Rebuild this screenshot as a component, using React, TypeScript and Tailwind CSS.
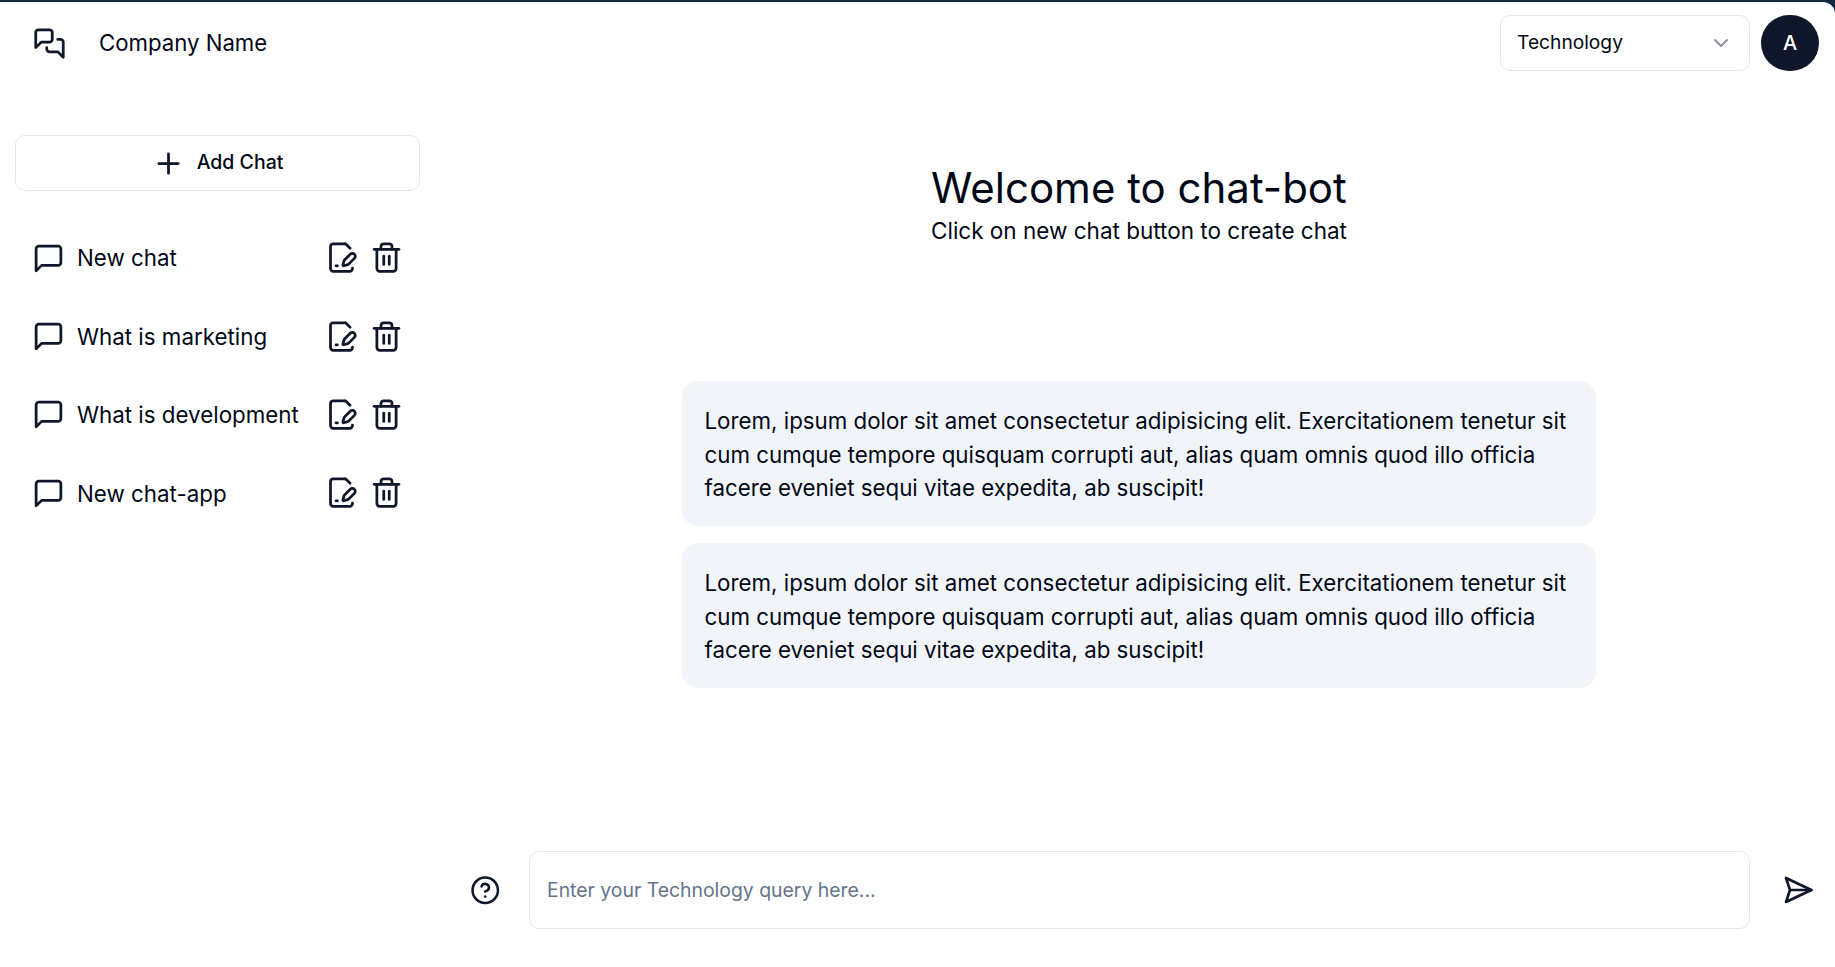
import { Plus, CircleHelp, ChevronDown, FilePenLine, Trash2 } from "lucide-react";

const chats = ["New chat", "What is marketing", "What is development", "New chat-app"];
const lorem = "Lorem, ipsum dolor sit amet consectetur adipisicing elit. Exercitationem tenetur sit cum cumque tempore quisquam corrupti aut, alias quam omnis quod illo officia facere eveniet sequi vitae expedita, ab suscipit!";

function Glyph({ size, className, children }: { size: number; className?: string; children: React.ReactNode }) {
  return (
    <svg width={size} height={size} viewBox="0 0 24 24" fill="none" stroke="currentColor" strokeWidth={2} strokeLinecap="round" strokeLinejoin="round" className={className}>
      {children}
    </svg>
  );
}

export default function App() {
  return (
    <div className="h-[967px] w-[1835px] overflow-hidden bg-[#0f2a43] pt-[2px] font-['Inter',sans-serif] text-[#020817]">
      <div className="flex h-[965px] flex-col rounded-tr-[12px] bg-white">
        <header className="flex h-[82px] items-center pl-[32.6px] pr-[16px]">
          <Glyph size={33} className="shrink-0 text-[#0f172a]">
            <path d="M14 9a2 2 0 0 1-2 2H6l-4 4V4c0-1.1.9-2 2-2h8a2 2 0 0 1 2 2v5Z" />
            <path d="M18 9h2a2 2 0 0 1 2 2v11l-4-4h-6a2 2 0 0 1-2-2v-1" />
          </Glyph>
          <span className="ml-[33.4px] text-[22.2px]">Company Name</span>
          <div className="ml-auto flex h-[56px] w-[250px] items-center justify-between rounded-[10px] border border-[#e2e8f0] pl-[16px] pr-[16px] text-[19.2px]">
            <span className="mb-[2px]">Technology</span>
            <ChevronDown size={24} strokeWidth={1.8} className="text-[#8a8f98]" />
          </div>
          <div className="ml-[11px] flex h-[56px] w-[58px] items-center justify-center rounded-full bg-[#0f172a] text-[20px] font-medium text-white">A</div>
        </header>
        <div className="flex min-h-0 flex-1">
          <aside className="w-[450px] shrink-0 pl-[15px] pt-[51px]">
            <div className="flex h-[56px] w-[405px] items-center justify-center gap-[12px] rounded-[10px] border border-[#e2e8f0] text-[19.5px] font-medium">
              <Plus size={33} strokeWidth={2} className="text-[#0f172a]" />
              <span>Add Chat</span>
            </div>
            <ul className="mt-[28px] flex w-[405px] flex-col">
              {chats.map((c) => (
                <li key={c} className="flex h-[78.4px] items-center pl-[17.2px] pr-[16.8px]">
                  <Glyph size={33} className="shrink-0 text-[#0f172a]">
                    <path d="M21 15a2 2 0 0 1-2 2H7l-4 4V5a2 2 0 0 1 2-2h14a2 2 0 0 1 2 2z" />
                  </Glyph>
                  <span className="ml-[11.8px] flex-1 text-[22.35px]">{c}</span>
                  <FilePenLine size={33} strokeWidth={2} className="mb-[1px] text-[#0f172a]" />
                  <Trash2 size={33} strokeWidth={2} className="mb-[1px] ml-[12.4px] text-[#0f172a]" />
                </li>
              ))}
            </ul>
          </aside>
          <main className="flex min-w-0 flex-1 flex-col">
            <div className="flex flex-1 flex-col items-center pr-[7px] pt-[79px]">
              <div className="w-fit">
                <h1 className="text-[42px] font-normal leading-[50px]">Welcome to chat-bot</h1>
                <p className="text-[22.5px] leading-[35px]">Click on new chat button to create chat</p>
              </div>
              <div className="mt-[133px] flex w-[914px] flex-col gap-[17px]">
                {[0, 1].map((i) => (
                  <div key={i} className="rounded-[16px] bg-[#f1f5f9] px-[22.5px] pb-[21.5px] pt-[23px] text-[22.3px] leading-[33.5px]">{lorem}</div>
                ))}
              </div>
            </div>
            <div className="flex h-[78px] items-center">
              <CircleHelp size={30.5} strokeWidth={2} className="ml-[19.7px] text-[#0f172a]" />
              <div className="ml-[28.8px] flex h-[78px] w-[1221px] items-center rounded-[10px] border border-[#e2e8f0] px-[17px] pt-[1.5px] text-[19.4px] text-[#64748b]">Enter your Technology query here...</div>
              <Glyph size={32} className="ml-[32px] shrink-0 text-[#0f172a]">
                <path d="m3 3 3 9-3 9 19-9Z" />
                <path d="M6 12h16" />
              </Glyph>
            </div>
            <div className="h-[38px]" />
          </main>
        </div>
      </div>
    </div>
  );
}
